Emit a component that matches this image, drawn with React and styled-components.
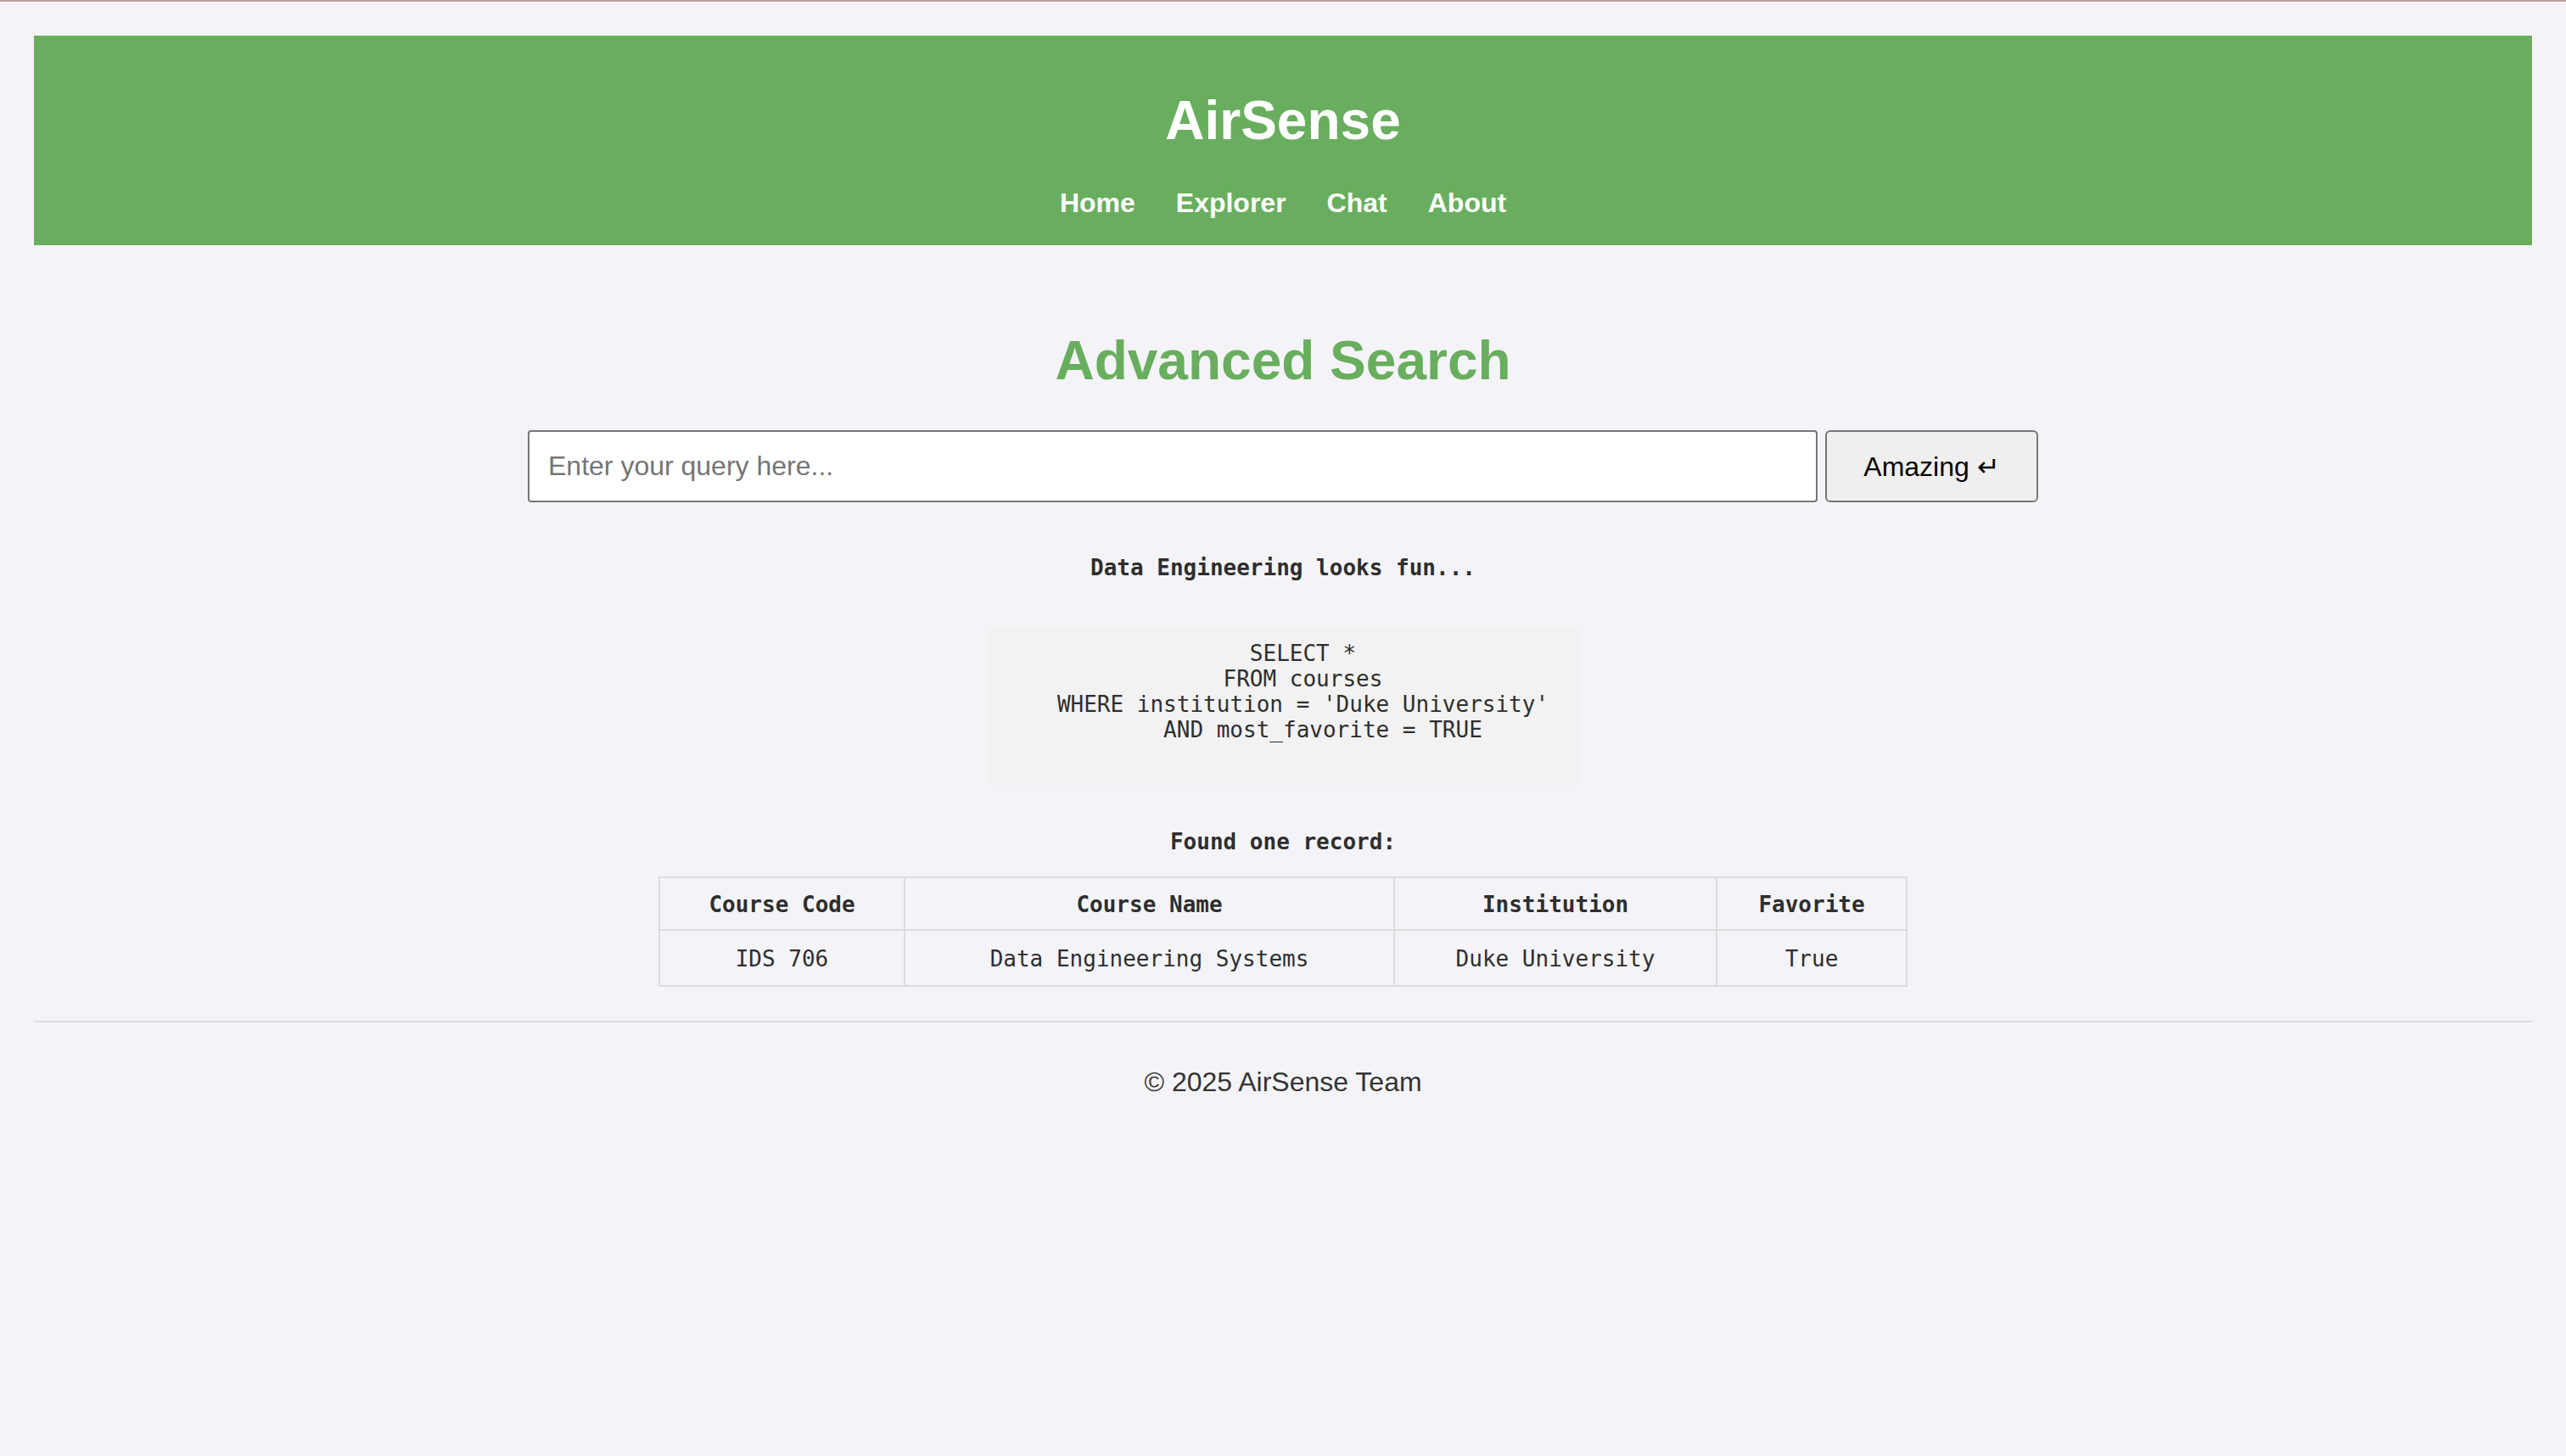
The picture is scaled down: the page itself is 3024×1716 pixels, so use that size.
import React from 'react';
import styled, { createGlobalStyle } from 'styled-components';

const GlobalStyle = createGlobalStyle`
  html, body {
    margin: 0;
    padding: 0;
    background: #f4f4f8;
  }
  body {
    font-family: "Liberation Sans", Arial, sans-serif;
    color: #333;
  }
`;

const Page = styled.div`
  border-top: 2px solid #c4999b;
  padding: 40px 40px 200px;
  min-height: 1674px;
  box-sizing: border-box;
`;

const Header = styled.header`
  background: #69ae5e;
  padding: 63px 0 31px;
  text-align: center;
  color: #fff;
`;

const Brand = styled.h1`
  margin: 0 0 42px;
  font-size: 64px;
  font-weight: 700;
`;

const Nav = styled.nav`
  display: flex;
  justify-content: center;
  gap: 48px;
`;

const NavLink = styled.a`
  color: #fff;
  font-size: 32px;
  font-weight: 700;
  text-decoration: none;
  cursor: pointer;
`;

const Main = styled.main`
  display: flex;
  flex-direction: column;
  align-items: center;
`;

const Title = styled.h2`
  margin: 99px 0 45px;
  font-size: 64px;
  font-weight: 700;
  color: #69ae5e;
`;

const SearchRow = styled.form`
  display: flex;
  align-items: center;
  gap: 9px;
`;

const QueryInput = styled.input`
  box-sizing: border-box;
  width: 1520px;
  height: 85px;
  padding: 0 22px;
  border: 2px solid #767676;
  border-radius: 4px;
  background: #fff;
  font-family: "Liberation Sans", Arial, sans-serif;
  font-size: 32px;
  color: #222;
  outline: none;

  &::placeholder {
    color: #757575;
  }
`;

const SubmitButton = styled.button`
  box-sizing: border-box;
  width: 251px;
  height: 85px;
  padding: 0;
  border: 2px solid #767676;
  border-radius: 6px;
  background: #efefef;
  font-family: "Liberation Sans", Arial, sans-serif;
  font-size: 32px;
  color: #000;
  cursor: pointer;
`;

const MonoNote = styled.p`
  margin: ${(p) => p.$mt}px 0 0;
  font-family: "DejaVu Sans Mono", "Liberation Mono", monospace;
  font-size: 26px;
  font-weight: 700;
  color: #2e2e2e;
`;

const Query = styled.pre`
  margin: 55px 0 0;
  padding: 16px 36px 50px;
  background: #f2f2f2;
  font-family: "DejaVu Sans Mono", "Liberation Mono", monospace;
  font-size: 26px;
  line-height: 30px;
  color: #2e2e2e;
  text-align: center;
  white-space: pre;
`;

const Results = styled.table`
  margin-top: 26px;
  width: 1470px;
  table-layout: fixed;
  border-collapse: collapse;
  font-family: "DejaVu Sans Mono", "Liberation Mono", monospace;
  font-size: 26px;
  color: #2e2e2e;
`;

const Col = styled.col`
  width: ${(p) => p.$w}px;
`;

const Th = styled.th`
  border: 2px solid #ddd;
  padding: 16px 8px 14px;
  font-weight: 700;
  text-align: center;
`;

const Td = styled.td`
  border: 2px solid #ddd;
  padding: 18px 8px 16px;
  text-align: center;
`;

const Divider = styled.hr`
  margin: 40px 0 0;
  border: none;
  border-top: 2px solid #ddd;
`;

const Footer = styled.footer`
  margin-top: 52px;
  text-align: center;
  font-size: 32px;
  color: #333;
`;

const sql = `   SELECT *
   FROM courses
   WHERE institution = 'Duke University'
      AND most_favorite = TRUE`;

const columns = [
  { label: 'Course Code', width: 289 },
  { label: 'Course Name', width: 577 },
  { label: 'Institution', width: 380 },
  { label: 'Favorite', width: 224 },
];

const rows = [['IDS 706', 'Data Engineering Systems', 'Duke University', 'True']];

export default function App() {
  return (
    <>
      <GlobalStyle />
      <Page>
        <Header>
          <Brand>AirSense</Brand>
          <Nav>
            {['Home', 'Explorer', 'Chat', 'About'].map((l) => (
              <NavLink key={l}>{l}</NavLink>
            ))}
          </Nav>
        </Header>

        <Main>
          <Title>Advanced Search</Title>
          <SearchRow onSubmit={(e) => e.preventDefault()}>
            <QueryInput placeholder="Enter your query here..." />
            <SubmitButton type="submit">Amazing ↵</SubmitButton>
          </SearchRow>

          <MonoNote $mt={62}>Data Engineering looks fun...</MonoNote>
          <Query>{sql}</Query>

          <MonoNote $mt={52}>Found one record:</MonoNote>
          <Results>
            <colgroup>
              {columns.map((c) => (
                <Col key={c.label} $w={c.width} />
              ))}
            </colgroup>
            <thead>
              <tr>
                {columns.map((c) => (
                  <Th key={c.label}>{c.label}</Th>
                ))}
              </tr>
            </thead>
            <tbody>
              {rows.map((r) => (
                <tr key={r[0]}>
                  {r.map((v, i) => (
                    <Td key={i}>{v}</Td>
                  ))}
                </tr>
              ))}
            </tbody>
          </Results>
        </Main>

        <Divider />
        <Footer>© 2025 AirSense Team</Footer>
      </Page>
    </>
  );
}
